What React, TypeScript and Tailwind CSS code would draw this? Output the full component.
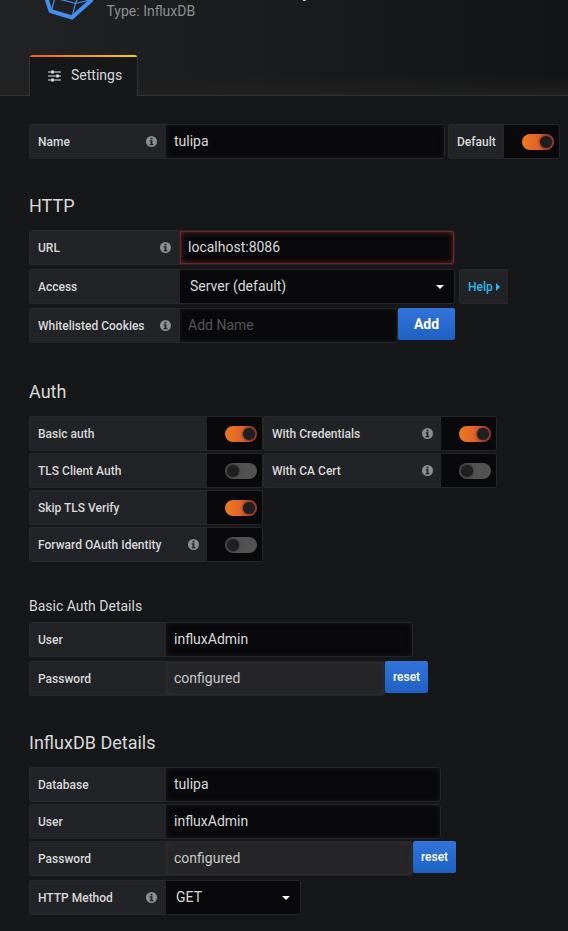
import React from 'react';

function Info() {
  return (
    <svg viewBox="0 0 12 12" className="ml-auto h-[11px] w-[11px] shrink-0">
      <circle cx="6" cy="6" r="6" fill="#8e8e8e" />
      <path d="M5 1.8h2v1.900H5zM4 4.700h3v4h1V10H4V8.700h1V6H4z" fill="#222326" />
    </svg>
  );
}

function Label({ text, width, info }: { text: string; width: string; info?: boolean }) {
  return (
    <div className={`flex h-[35px] shrink-0 items-center rounded-l-[3px] border border-r-0 border-[#28292b] bg-[#222326] pl-2 text-[12px] font-medium text-[#d8d9da] ${width}`}>
      <span className="whitespace-nowrap">{text}</span>
      {info && <Info />}
    </div>
  );
}

function Field({ text, width, kind = 'normal' }: { text: string; width: string; kind?: 'normal' | 'error' | 'disabled' | 'placeholder' }) {
  const look = {
    normal: 'bg-[#09090b] text-[#d8d9da] shadow-[inset_0_0_5px_#1b1b1d]',
    error: 'bg-[#09090b] text-[#d8d9da] shadow-[inset_0_0_0_1px_#6e2823,inset_0_0_6px_#8a2f2a]',
    disabled: 'bg-[#262628] text-[#c7c8c9] shadow-[inset_0_0_5px_#303032]',
    placeholder: 'bg-[#09090b] text-[#52545a] shadow-[inset_0_0_5px_#1b1b1d]',
  }[kind];
  return (
    <div className={`h-[35px] shrink-0 rounded-r-[3px] border border-[#262628] px-2 pt-[6px] text-[14px] leading-[21px] ${look} ${width}`}>
      {text}
    </div>
  );
}

function Select({ text, width }: { text: string; width: string }) {
  return (
    <div className={`flex h-[35px] shrink-0 items-start justify-between rounded-r-[3px] border border-[#262628] bg-[#09090b] pl-[10px] pr-[10px] pt-[6px] text-[14px] leading-[21px] text-[#d8d9da] ${width}`}>
      {text}
      <svg viewBox="0 0 8 4" className="mt-[9px] h-1 w-2"><path d="M0 0h8L4 4z" fill="#fff" /></svg>
    </div>
  );
}

function Toggle({ on }: { on?: boolean }) {
  return (
    <div className="flex h-[35px] w-[57px] shrink-0 justify-end rounded-r-[3px] border border-[#262628] bg-[#09090b] pr-[5px] pt-[9px]">
      <div className={`flex h-4 w-8 items-center rounded-full px-[2px] ${on ? 'justify-end bg-linear-to-r from-[#eb7b18] via-[#e0622b] to-[#b3352f]' : 'bg-[#525252]'}`}>
        <div className="h-3 w-3 rounded-full bg-[#1f1f20] shadow-[0_0_3px_#1f1f20]" />
      </div>
    </div>
  );
}

function Button({ text, look }: { text: string; look: string }) {
  return (
    <button className={`h-8 shrink-0 rounded-[2px] bg-linear-to-b from-[#3274d9] to-[#1f60c4] text-white ${look}`}>
      {text}
    </button>
  );
}

function Heading({ text, look }: { text: string; look: string }) {
  return <h3 className={`h-[22px] text-[18px] leading-[22px] text-[#d8d9da] ${look}`}>{text}</h3>;
}

export default function App() {
  return (
    <div className="h-[931px] w-[568px] overflow-hidden bg-[#161719] font-[Roboto,sans-serif] text-[#d8d9da]">
      <header className="flex h-24 flex-col border-b border-[#343436] bg-[linear-gradient(to_bottom,transparent_75px,#202020_95px),linear-gradient(to_right,#212224,#131415)]">
        <div className="flex h-[55px] shrink-0 pl-[45px]">
          <svg viewBox="0 0 48 22" className="h-[22px] w-12 shrink-0 overflow-visible" fill="none" stroke="#458ff0">
            <path d="M1 -3L5.500 11L27 17.500L46 .5L48 -8" strokeWidth="4" strokeLinejoin="round" />
            <path d="M9.500 -1L6.500 11M14 -1L30.500 3.500L27 17M30.500 3.500L45 0M30.500 3.500L33 -3" strokeWidth="1.200" />
          </svg>
          <div className="ml-[13.500px] pt-[3px] text-[14px] leading-[17px] text-[#8e8e8e]">Type: InfluxDB</div>
          <span className="-mt-[17px] ml-[107px] h-4 text-[18px] leading-[16px]">y</span>
        </div>
        <div className="ml-[29px] h-[41px] w-[109px] shrink-0 rounded-t-[3px] border-x border-[#343436] bg-[#161719]">
          <div className="h-[2px] rounded-t-sm bg-linear-to-r from-[#f05a28] to-[#fbca0a]" />
          <div className="flex h-[37px] items-center pl-[18px] text-[14px]">
            <svg viewBox="0 0 13 12" className="h-3 w-[13px]" stroke="#e3e4e5" fill="none">
              <path d="M0 2h13M0 6h13M0 10h13" strokeWidth="1.100" />
              <path d="M4.500 .5v3M9.500 4.500v3M4.500 8.500v3" strokeWidth="2.500" />
            </svg>
            <span className="ml-[10px]">Settings</span>
          </div>
        </div>
      </header>
      <main className="pl-[29px] pt-7">
        <div className="flex">
          <Label text="Name" width="w-[136px] pr-2" info />
          <Field text="tulipa" width="w-[280px]" />
          <div className="ml-[3px] flex"><Label text="Default" width="w-[55px]" /><Toggle on /></div>
        </div>
        <Heading text="HTTP" look="mt-9" />
        <div className="mt-[13px] flex flex-col gap-1">
          <div className="flex"><Label text="URL" width="w-[150px] pr-2" info /><Field text="localhost:8086" width="w-[276px]" kind="error" /></div>
          <div className="flex">
            <Label text="Access" width="w-[150px]" /><Select text="Server (default)" width="w-[276px]" />
            <div className="ml-1 flex h-[35px] w-[49px] items-center gap-[3px] rounded-l-[3px] border border-r-0 border-[#28292b] bg-[#222326] pl-2 text-[12px] font-medium text-[#33b5e5]">
              Help<svg viewBox="0 0 4 8" className="h-2 w-1"><path d="M0 0v8l4-4z" fill="#33b5e5" /></svg>
            </div>
          </div>
          <div className="flex"><Label text="Whitelisted Cookies" width="w-[150px] pr-2" info /><Field text="Add Name" width="w-[219px]" kind="placeholder" /><Button text="Add" look="w-[57px] text-[14px] font-bold" /></div>
        </div>
        <Heading text="Auth" look="mt-[38px]" />
        <div className="mt-[13px] flex flex-col gap-[2px]">
          <div className="flex"><Label text="Basic auth" width="w-[177px]" /><Toggle on /><Label text="With Credentials" width="w-[177px] pr-[7px]" info /><Toggle on /></div>
          <div className="flex"><Label text="TLS Client Auth" width="w-[177px]" /><Toggle /><Label text="With CA Cert" width="w-[177px] pr-[7px]" info /><Toggle /></div>
          <div className="flex"><Label text="Skip TLS Verify" width="w-[177px]" /><Toggle on /></div>
          <div className="flex"><Label text="Forward OAuth Identity" width="w-[177px] pr-[7px]" info /><Toggle /></div>
        </div>
        <h6 className="mt-[34px] h-5 text-[14px] leading-5">Basic Auth Details</h6>
        <div className="mt-[6px] flex flex-col gap-1">
          <div className="flex"><Label text="User" width="w-[136px]" /><Field text="influxAdmin" width="w-[248px]" /></div>
          <div className="flex"><Label text="Password" width="w-[136px]" /><Field text="configured" width="w-[220px]" kind="disabled" /><Button text="reset" look="w-[43px] text-[12px] font-medium" /></div>
        </div>
        <Heading text="InfluxDB Details" look="mt-9" />
        <div className="mt-[13px] flex flex-col gap-[2px]">
          <div className="flex"><Label text="Database" width="w-[136px]" /><Field text="tulipa" width="w-[276px]" /></div>
          <div className="flex"><Label text="User" width="w-[136px]" /><Field text="influxAdmin" width="w-[276px]" /></div>
          <div className="flex"><Label text="Password" width="w-[136px]" /><Field text="configured" width="w-[248px]" kind="disabled" /><Button text="reset" look="w-[43px] text-[12px] font-medium" /></div>
          <div className="mt-[2px] flex"><Label text="HTTP Method" width="w-[136px] pr-2" info /><Select text="GET" width="w-[136px]" /></div>
        </div>
      </main>
    </div>
  );
}
